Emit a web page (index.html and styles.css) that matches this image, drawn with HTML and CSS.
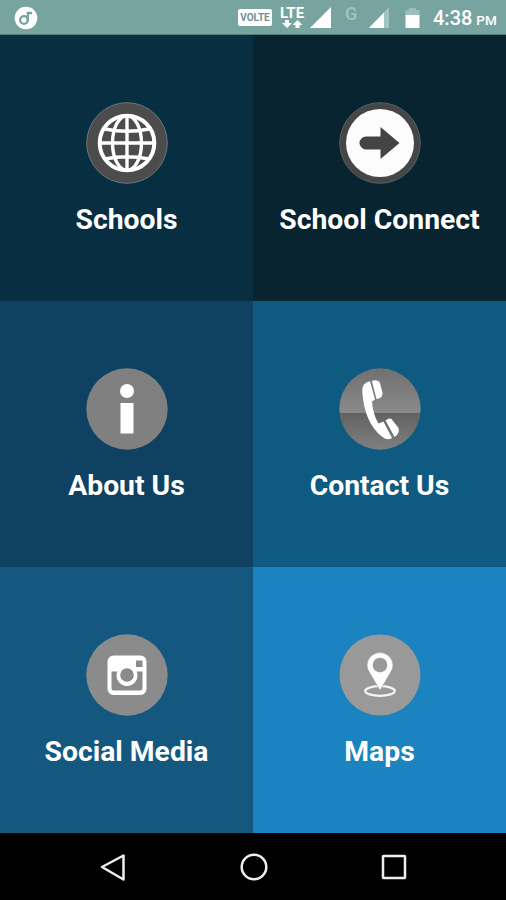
FILE: index.html
```
<!DOCTYPE html>
<html lang="en">
<head>
  <meta charset="UTF-8">
  <meta name="viewport" content="width=device-width, initial-scale=1.0">
  <title>Schools</title>
  <link rel="stylesheet" href="styles.css">
</head>
<body>
  <header class="status-bar">
    <svg class="music" width="24" height="24" viewBox="0 0 24 24">
      <circle cx="12" cy="12" r="11.3" fill="#fff"/>
      <circle cx="10" cy="14" r="3.8" fill="none" stroke="#78a4a0" stroke-width="2.3"/>
      <path d="M13.8 15V7H18" fill="none" stroke="#78a4a0" stroke-width="2.3"/>
    </svg>
    <div class="indicators">
      <span class="volte">VOLTE</span>
      <div class="lte">
        <span>LTE</span>
        <svg width="20" height="8" viewBox="0 0 20 8" fill="#fff">
          <path d="M3 0h4v3h3L5 8 0 3h3zM13.500 8h4V5h3L15.500 0l-5 5h3z"/>
        </svg>
      </div>
      <svg class="signal" width="21" height="21" viewBox="0 0 21 21"><path d="M21 0v21H0z" fill="#fff"/></svg>
      <span class="network">G</span>
      <svg class="signal-weak" width="20" height="21" viewBox="0 0 20 21">
        <path d="M20 0v21H0z" fill="#a3c3bf"/>
        <path d="M15 5.500V21H0z" fill="#fff"/>
      </svg>
      <svg class="battery" width="15" height="20" viewBox="0 0 15 20">
        <path d="M4 0h7v2h3.500v6H.5V2H4z" fill="#9dbebb"/>
        <path d="M.5 7h14v12a1 1 0 0 1-1 1h-12a1 1 0 0 1-1-1z" fill="#fff"/>
      </svg>
      <div class="clock">4:38 <small>PM</small></div>
    </div>
  </header>

  <main class="grid">
    <a class="tile schools">
      <svg class="icon" viewBox="0 0 82 82">
        <circle cx="41" cy="41" r="40.300" fill="#4c4c4c" stroke="#69767b"/>
        <g fill="none" stroke="#fff" stroke-width="3.400">
          <circle cx="41" cy="41" r="27.300" stroke-width="4"/>
          <ellipse cx="41" cy="41" rx="14.500" ry="27.300"/>
          <path d="M41 13v56M13 41h56M19 27q22 4.500 44 0M19 57q22-4.500 44 0"/>
        </g>
      </svg>
      <span class="label">Schools</span>
    </a>
    <a class="tile connect">
      <svg class="icon" viewBox="0 0 82 82">
        <circle cx="41" cy="41" r="40.300" fill="#464646" stroke="#526168"/>
        <circle cx="41" cy="41" r="34" fill="#fcfcfc"/>
        <path d="M27 34.500h14.500V25l19 16-19 16V47.500H27a6.500 6.500 0 0 1 0-13z" fill="#444"/>
      </svg>
      <span class="label">School Connect</span>
    </a>
    <a class="tile about">
      <svg class="icon" viewBox="0 0 82 82">
        <circle cx="41" cy="41" r="40.700" fill="#808080"/>
        <circle cx="41" cy="23" r="7" fill="#fff"/>
        <path d="M34.500 35h13v30.500h-13z" fill="#fff"/>
      </svg>
      <span class="label">About Us</span>
    </a>
    <a class="tile contact">
      <svg class="icon" viewBox="0 0 82 82">
        <defs>
          <linearGradient id="gloss" x1="0" y1="0" x2="0" y2="1">
            <stop offset="0" stop-color="#707070"/>
            <stop offset=".55" stop-color="#8a8a8a"/>
            <stop offset=".55" stop-color="#626262"/>
            <stop offset="1" stop-color="#808080"/>
          </linearGradient>
        </defs>
        <circle cx="41" cy="41" r="40.700" fill="url(#gloss)"/>
        <g fill="#fff">
          <path d="M31 13.300Q22.500 15 23.300 24C24.500 43 31 60 43.500 69Q48.500 73 53 70L44.500 53.500 39.500 55.500C35.500 49 33.500 41 33 33.500L36 31.500z"/>
          <path d="M32.800 12.700Q39 11 41 15L43.500 25Q43.500 29 40 30.500L37.500 31z"/>
          <path d="M46.500 52.500Q50 49.500 52.500 51L59.500 60Q61 65.500 55.500 69z"/>
        </g>
      </svg>
      <span class="label">Contact Us</span>
    </a>
    <a class="tile social">
      <svg class="icon" viewBox="0 0 82 82">
        <circle cx="41" cy="41" r="40.700" fill="#8b8b8b"/>
        <path fill="#fff" fill-rule="evenodd" d="M27.500 21.500h27a6 6 0 0 1 6 6v27.500a6 6 0 0 1-6 6h-27a6 6 0 0 1-6-6V27.500a6 6 0 0 1 6-6zM25.500 37.500V54a2.500 2.500 0 0 0 2.500 2.500h26a2.500 2.500 0 0 0 2.500-2.500V37.500h-5.800a10.500 10.500 0 1 1-19.400 0zM50 26.500v6.500h6.500v-6.500z"/>
        <circle cx="41" cy="41" r="6.800" fill="#8b8b8b"/>
      </svg>
      <span class="label">Social Media</span>
    </a>
    <a class="tile maps">
      <svg class="icon" viewBox="0 0 82 82">
        <circle cx="41" cy="41" r="40.500" fill="#999"/>
        <ellipse cx="41" cy="57" rx="14.800" ry="4.800" fill="none" stroke="#f4f4f4" stroke-width="2.200"/>
        <path d="M41 56.500 30.500 38.500Q28 35 28 31.500a13 13 0 0 1 26 0Q54 35 51.500 38.500z" fill="#fcfcfc" stroke="#999" stroke-width=".6"/>
        <circle cx="41" cy="31" r="7.300" fill="#999"/>
      </svg>
      <span class="label">Maps</span>
    </a>
  </main>

  <nav class="nav-bar">
    <svg viewBox="0 0 28 28"><path d="M3 14 24.500 2.500v24z"/></svg>
    <svg viewBox="0 0 28 28"><circle cx="14" cy="14" r="12.300"/></svg>
    <svg viewBox="0 0 28 28"><rect x="3" y="3" width="22" height="22" rx=".5"/></svg>
  </nav>
</body>
</html>
```
FILE: styles.css
```
* {
  margin: 0;
  padding: 0;
  box-sizing: border-box;
}

body {
  height: 900px;
  display: flex;
  flex-direction: column;
  font-family: Roboto, sans-serif;
  color: #fff;
  background: #000;
  overflow: hidden;
}

.status-bar {
  height: 35px;
  padding: 6px 9px 0 14px;
  display: flex;
  justify-content: space-between;
  align-items: flex-start;
  background: #78a4a0;
  border-bottom: 1px solid #517e80;
}

.indicators {
  display: flex;
  align-items: flex-start;
}

.volte {
  width: 34px;
  height: 17px;
  margin: 3px 7px 0 0;
  border-radius: 2px;
  background: #fff;
  color: #6f918f;
  font-size: 10px;
  font-weight: 700;
  line-height: 17px;
  text-align: center;
}

.lte {
  width: 26px;
  margin-right: 5px;
  display: flex;
  flex-direction: column;
  align-items: center;
  font-size: 15px;
  font-weight: 700;
  line-height: 14px;
}

.signal {
  margin: 1px 14px 0 0;
}

.network {
  width: 14px;
  margin-right: 10px;
  color: #a3c3bf;
  font-size: 18px;
  font-weight: 500;
  line-height: 15px;
}

.signal-weak {
  margin: 1px 16px 0 0;
}

.battery {
  margin: 2px 13px 0 0;
}

.clock {
  width: 64px;
  font-size: 20px;
  font-weight: 500;
  line-height: 25px;
  white-space: nowrap;
}

.clock small {
  margin-left: -1px;
  font-size: 13.5px;
}

.grid {
  height: 798px;
  display: grid;
  grid-template-columns: 253px 253px;
  grid-template-rows: repeat(3, 266px);
}

.tile {
  display: flex;
  flex-direction: column;
  align-items: center;
  padding-top: 67px;
}

.schools {
  background: #082e41;
}

.connect {
  background: #072430;
}

.about {
  background: #0f4162;
}

.contact {
  background: #0f5a80;
}

.social {
  background: #145880;
}

.maps {
  background: #1b83c0;
}

.icon {
  width: 82px;
  height: 82px;
}

.label {
  margin-top: 18px;
  font-size: 28.3px;
  font-weight: 700;
  line-height: 35px;
  white-space: nowrap;
}

.nav-bar {
  height: 67px;
  padding: 0 98px 0 99px;
  display: flex;
  justify-content: space-between;
  align-items: center;
  background: #000;
}

.nav-bar svg {
  width: 28px;
  height: 28px;
  fill: none;
  stroke: #eee;
  stroke-width: 2.5;
  stroke-linejoin: round;
}
```
